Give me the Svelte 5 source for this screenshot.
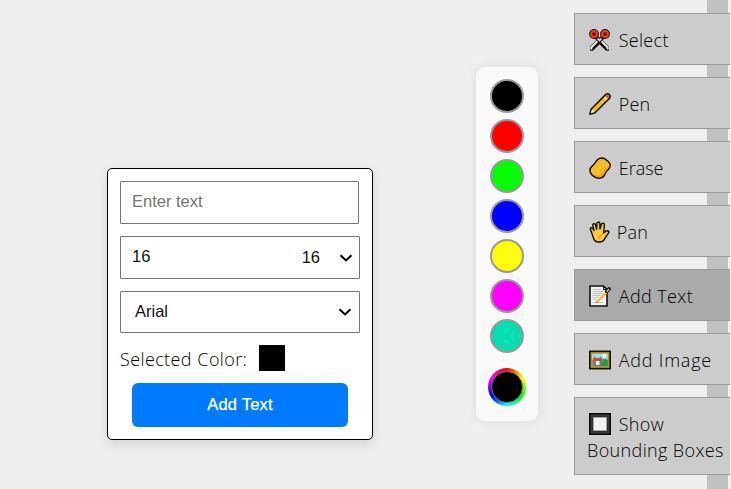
<script>
  const tools = [
    { id: 'scissors', label: 'Select' },
    { id: 'pencil', label: 'Pen' },
    { id: 'sponge', label: 'Erase' },
    { id: 'hand', label: 'Pan' },
    { id: 'memo', label: 'Add Text', active: true },
    { id: 'picture', label: 'Add Image' },
    { id: 'square', label: 'Show', second: 'Bounding Boxes' }
  ];
  const colors = ['#000000', '#ff0000', '#00ff00', '#0000ff', '#ffff00', '#ff00ff', '#00dfb0'];
</script>

{#snippet chevron()}
  <svg class="chevron" width="14" height="10" viewBox="0 0 14 10">
    <path d="M1.5 2.2 L7 7.4 L12.5 2.2" fill="none" stroke="#000" stroke-width="2" />
  </svg>
{/snippet}

<div class="app">
  <section class="dialog">
    <div class="field text"><span class="placeholder">Enter text</span></div>
    <div class="field size"><span class="typed">16</span><span class="current">16</span>{@render chevron()}</div>
    <div class="field family"><span>Arial</span>{@render chevron()}</div>
    <div class="selected"><span class="caption">Selected Color:</span><i></i></div>
    <button class="submit">Add Text</button>
  </section>

  <section class="palette">
    {#each colors as color}
      <button class="swatch" aria-label={color} style:background={color}></button>
    {/each}
    <div class="wheel"><i></i></div>
  </section>

  <nav>
    {#each tools as tool}
      <button class="tool {tool.id}" class:active={tool.active}>
        <span class="line">
          <svg class="icon" width="22" height="22" viewBox="0 0 22 22">
            {#if tool.id === 'scissors'}
              <path d="M1 21.8 V17.8 L9 9.5 L12 9.5 L20 17.8 V21.8 H17 L10.5 15.3 L4 21.8Z" fill="#111" />
              <path d="M2.3 20.5 V18.5 L11 9.5 M18.7 20.5 V18.5 L10 9.5" fill="none" stroke="#e8e8e8" stroke-width="2" />
              <path d="M6 7 L10.5 11.5 L15 7" fill="none" stroke="#111" stroke-width="4" />
              <circle cx="5" cy="5" r="4.9" fill="#111" />
              <circle cx="16" cy="5" r="4.9" fill="#111" />
              <circle cx="5" cy="5" r="2.8" fill="#111" stroke="#ff3514" stroke-width="2.3" />
              <circle cx="16" cy="5" r="2.8" fill="#111" stroke="#ff3514" stroke-width="2.3" />
              <path d="M8.5 9.5 L10.5 11.5 L12.5 9.5" fill="none" stroke="#ccc" stroke-width="1.8" />
            {:else if tool.id === 'pencil'}
              <path d="M.8 21.2 L2.3 16 L16.6 1.6 Q18.4 .1 20.4 1.6 Q22 3.6 20.4 5.4 L6 19.7 Z" fill="#ffb900" stroke="#111" stroke-width="1.5" stroke-linejoin="round" />
              <path d="M17.3 2.4 Q18.6 1.4 19.7 2.3 Q20.7 3.5 19.6 4.7 L18.7 5.7 L16.3 3.3 Z" fill="#e74856" />
              <path d="M14.6 5 L16.2 3.4 L18.6 5.8 L17 7.4 Z" fill="#ddd" />
              <path d="M3 16.6 L5.4 19 L1.8 20.2 Z" fill="#eee" />
            {:else if tool.id === 'sponge'}
              <path d="M1 13.5 Q.7 11 3.4 8.8 Q5.7 7 7 4.5 Q9.2 .9 13 .9 Q15.6 1 17.2 2.9 Q19.5 4.2 21 7 Q21.7 9.5 19.8 12 Q16.8 14.3 15.8 17.6 Q14 21 9.8 21.2 Q7.3 21.2 5.2 19.7 Q1.3 17.3 1 13.5Z" fill="#ffbf2a" stroke="#111" stroke-width="1.5" />
              <path d="M2 15.2 Q5.8 19.2 9.7 18.5 Q13 17.7 14 14.4 Q15.2 11.8 18 10.7 Q20 9.5 20.4 7.5 Q20.8 9.6 19 11.5 Q16.3 13.7 15 17.1 Q13.1 20.3 9.8 20.4 Q7.7 20.4 5.7 19Z" fill="#f59b00" />
              <path d="M9 5h1M13 3h1M16 6h1M12 8h1M8 10h1M5 12h1M11 13h1M7 15h1M15 10h1" stroke="#dc8300" stroke-width="1" />
            {:else if tool.id === 'hand'}
              <path d="M1.2 7.6 Q2.3 5.7 3.8 7.5 L5 9.6 L3.7 3.8 Q4.5 1.8 6.3 3.1 L7.7 8.2 L7.9 2.1 Q9.4 .1 10.8 2 L11 8.1 L12.6 2.8 Q14.3 1.3 15.4 3.2 L14.6 12 L17.2 9.9 Q19.8 9.4 20 11.3 L16.4 16.5 Q14.5 21.3 9.8 21 Q5.3 20.8 4.3 16.5Z" fill="#ffc83d" stroke="#111" stroke-width="1.4" stroke-linejoin="round" />
              <path d="M9.5 18 Q10 14.8 13.8 13.3" fill="none" stroke="#d98c00" />
            {:else if tool.id === 'memo'}
              <path d="M1 1 H14.5 L18 4.5 V21 H1Z" fill="#f2f2f2" stroke="#111" stroke-width="1.6" />
              <path d="M3.5 4.5 H11 M3.5 6.5 H14 M3.5 8.5 H14 M3.5 10.5 H12 M3.5 12.5 H10 M3.5 14.5 H8 M3.5 17.5 H14" stroke="#bbb" stroke-width=".9" />
              <path d="M14.5 1 V4.5 H18" fill="none" stroke="#111" />
              <path d="M8 17.3 L19 5.7" stroke="#f6b921" stroke-width="2.1" />
              <path d="M7 18.2 L8.4 16.3" stroke="#777" />
              <path d="M17.8 6.1 L20 4" stroke="#111" stroke-width="3.8" stroke-linecap="round" />
              <path d="M17.6 6.6 L20.2 4" stroke="#dba4a4" stroke-width="1.5" />
            {:else if tool.id === 'picture'}
              <rect x=".8" y="2.3" width="20.4" height="17.4" fill="#c98a0c" stroke="#111" stroke-width="1.6" />
              <rect x="3.2" y="4.7" width="15.6" height="12.6" fill="#9be1fb" />
              <path d="M3.2 11 L7 9 L11 10 L15 10 L18.8 11 V17.3 H3.2Z" fill="#5f8f99" />
              <path d="M12 17.3 V15 L16.5 9.5 L18.8 11 V17.3Z" fill="#14a044" />
              <circle cx="15.3" cy="6.6" r="1.8" fill="#fff" />
              <path d="M5 17.3 V7 L7 9 H10.2 L12.3 7 V17.3Z" fill="#777" />
              <path d="M4.3 9 H6.5 L8.6 10 L10.8 9 H13 V12 H11 L8.6 11 L6.3 12 H4.3Z" fill="#ef3e25" />
              <path d="M7 12 H10.5 V16 H7Z" fill="#eee" />
            {:else}
              <rect x=".7" y=".7" width="20.6" height="20.6" fill="#3b3b3b" stroke="#080808" stroke-width="1.4" />
              <rect x="4" y="4" width="14" height="14" fill="#f2f2f2" stroke="#222" stroke-width=".7" />
            {/if}
          </svg>
          <span class="label">{tool.label}</span>
        </span>
        {#if tool.second}<span class="second">{tool.second}</span>{/if}
      </button>
    {/each}
  </nav>
</div>

<style>
  :global(body) { background: #efefef; }
  * { box-sizing: border-box; }
  button { margin: 0; cursor: pointer; }
  .app {
    display: flex;
    align-items: flex-start;
    width: 731px;
    height: 489px;
    overflow: hidden;
    background: #efefef;
    color: #000;
    font-family: "Open Sans", "Noto Sans", sans-serif;
    font-weight: 300;
  }
  .dialog {
    display: flex;
    flex: none;
    flex-direction: column;
    width: 266px;
    height: 272px;
    margin: 168px 0 0 107px;
    padding: 12px;
    background: #fff;
    border: 1px solid #000;
    border-radius: 5px;
    box-shadow: 0 4px 12px rgba(0, 0, 0, .12);
  }
  .field {
    display: flex;
    flex: none;
    align-items: center;
    width: 240px;
    height: 43px;
    margin-bottom: 12px;
    padding: 0 6px 0 11px;
    border: 1px solid #767676;
    border-radius: 1px;
    font: 400 16.5px/20px "Liberation Sans", Arial, sans-serif;
    color: #111;
  }
  .text { width: 239px; padding-bottom: 3px; }
  .placeholder { color: #757575; }
  .typed { padding-bottom: 3px; }
  .current { margin-left: auto; margin-right: 19px; padding-bottom: 1px; }
  .family { height: 42px; padding-left: 14px; margin-bottom: 11px; }
  .family span { padding-bottom: 2px; }
  .family .chevron { margin-left: auto; margin-right: 1px; }
  .selected { display: flex; flex: none; align-items: center; height: 28px; margin-bottom: 11px; }
  .selected i { width: 26px; height: 26px; margin-left: 12px; background: #000; }
  .caption { width: 127px; padding-top: 1px; white-space: nowrap; font-size: 18px; line-height: 26px; letter-spacing: .37px; word-spacing: .5px; }
  .submit {
    flex: none;
    width: 216px;
    height: 44px;
    margin-left: 12px;
    padding: 0 0 2px;
    border: 0;
    border-radius: 6px;
    background: #007bff;
    color: #fff;
    font: 400 16.5px/20px "Liberation Sans", Arial, sans-serif;
    letter-spacing: .2px;
    -webkit-text-stroke: .25px #fff;
  }
  .palette {
    display: flex;
    flex: none;
    flex-direction: column;
    align-items: center;
    gap: 6px;
    width: 62px;
    height: 354px;
    margin: 67px 0 0 103px;
    padding-top: 12px;
    border-radius: 9px;
    background: #f9f9f9;
    box-shadow: 0 0 12px rgba(0, 0, 0, .09);
  }
  .swatch { flex: none; width: 34px; height: 34px; padding: 0; border: 2px solid #999; border-radius: 50%; }
  .wheel {
    display: flex;
    flex: none;
    width: 38px;
    height: 38px;
    margin-top: 9px;
    padding: 3px;
    border-radius: 50%;
    background: conic-gradient(red, yellow 60deg, lime 120deg, cyan 180deg, blue 240deg, magenta 300deg, red);
  }
  .wheel i { flex: 1; border: 1px solid #777; border-radius: 50%; background: #000; }
  nav {
    display: flex;
    flex: none;
    flex-direction: column;
    gap: 12px;
    width: 156px;
    height: 489px;
    margin-left: 36px;
    padding-top: 13px;
    background: linear-gradient(90deg, transparent 133px, #c1c1c1 133px 154px, transparent 154px);
  }
  .tool {
    display: flex;
    flex: none;
    flex-direction: column;
    width: 156px;
    height: 52px;
    padding: 13px 0 0 12px;
    border: 1px solid #999;
    border-right: 0;
    background: #ccc;
    color: #000;
    font: inherit;
    font-size: 18px;
    line-height: 26px;
    letter-spacing: .2px;
    text-align: left;
    white-space: nowrap;
  }
  .active { background: #aaa; }
  .square { height: 78px; letter-spacing: .37px; }
  .line { display: flex; align-items: center; height: 26px; }
  .icon { flex: none; margin: 1px 7.7px 1px 2px; }
  .scissors { letter-spacing: .3px; }
  .sponge { letter-spacing: 0; }
  .hand .icon { margin-right: 5.7px; }
  .memo { letter-spacing: .4px; }
  .picture { letter-spacing: .8px; }
</style>
